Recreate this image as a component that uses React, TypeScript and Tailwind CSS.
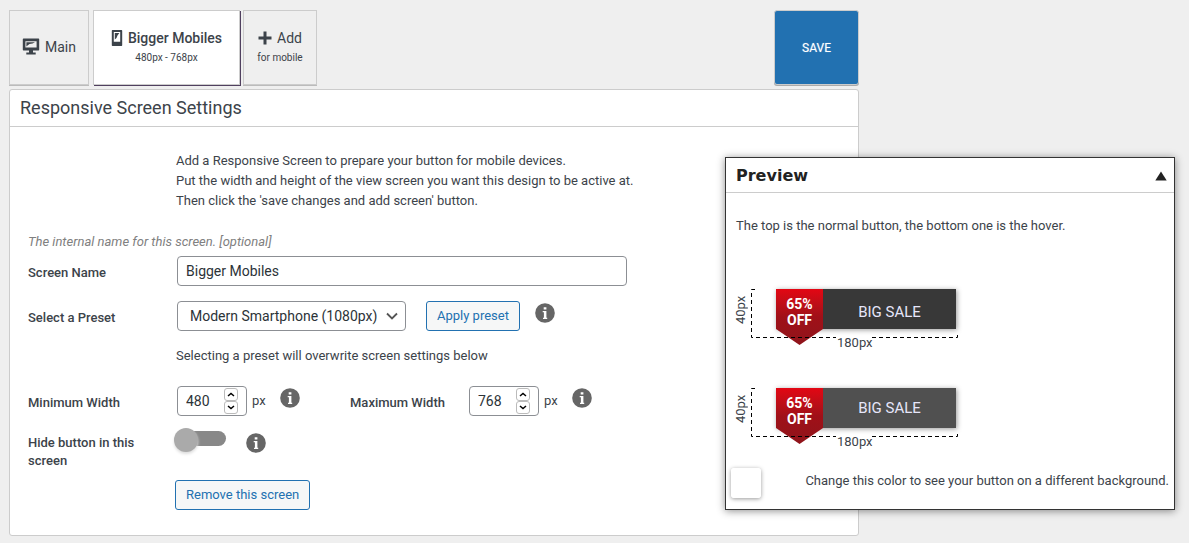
import { useState, type ReactNode } from "react";

function Info({ about, className = "" }: { about: string; className?: string }) {
  return (
    <button type="button" aria-label={about} className={`text-[#666] ${className}`}>
      <svg className="block" width="20" height="20" viewBox="0 0 20 20" aria-hidden="true">
        <circle cx="10" cy="10" r="9.800" fill="currentColor" />
        <path fill="#fff" d="M8.700 4.200h2.700v2.400H8.700zM7.700 8h3.700v6.800h0.800v1.200H8v-1.200h0.900V9.200H7.700z" />
      </svg>
    </button>
  );
}

function DesktopIcon() {
  return (
    <svg width="18" height="17" viewBox="0 0 18 17" aria-hidden="true">
      <path fill="currentColor" fillRule="evenodd" d="M1.500 0.500h15q0.700 0 0.700 0.700v10.600q0 0.700-0.700 0.700H11V14.500h2.700V16.500H4.300V14.500H7V12.500H1.500q-0.700 0-0.700-0.700V1.200q0-0.700 0.700-0.700zM3.400 3.200v6.400h11.200V3.200z" />
      <path fill="currentColor" d="M4.400 4.200h8.600L10.500 5.400 7.500 6 5.500 7.500 4.400 8.500z" />
    </svg>
  );
}

function PhoneIcon() {
  return (
    <svg width="12" height="18" viewBox="0 0 12 18" aria-hidden="true">
      <path fill="currentColor" fillRule="evenodd" d="M1.500 1h9q0.700 0 0.700 0.700v14.600q0 0.700-0.700 0.700h-9q-0.700 0-0.700-0.700V1.700q0-0.700 0.700-0.700zM2.800 3v9.800h6.400V3z" />
      <path fill="currentColor" d="M3.800 4h4.600L6.500 6.500 5.500 9 3.800 10.500z" />
    </svg>
  );
}

function PlusIcon() {
  return (
    <svg width="14" height="14" viewBox="0 0 14 14" aria-hidden="true">
      <path fill="currentColor" d="M5.500 0.500h3v5h5v3h-5v5h-3v-5h-5v-3h5z" />
    </svg>
  );
}

function Tab({ icon, title, note, active = false, className }: {
  icon: ReactNode; title: string; note?: string; active?: boolean; className: string;
}) {
  return (
    <button
      type="button"
      className={`flex h-[75px] flex-col items-center justify-center border border-[#ccc] ${
        active ? "bg-white font-medium shadow-[1px_1px_0_#50405f]" : "bg-[#efefef] shadow-[0_1px_0_#bbb]"
      } ${note ? "pb-1" : "pb-[2px]"} ${className}`}
    >
      <span className="flex items-center gap-[5px] leading-6">
        {icon}
        <span className="text-[14px]">{title}</span>
      </span>
      {note && <span className="text-[10px] font-normal leading-4">{note}</span>}
    </button>
  );
}

function NumberField({ id, initial }: { id: string; initial: number }) {
  const [value, setValue] = useState(initial);
  const step = "flex h-[13px] w-[14px] items-center justify-center rounded-[3px] border border-[#bbb] bg-white text-black";
  return (
    <span className="flex h-[30px] w-[70px] items-center rounded border border-[#8c8f94] pl-2">
      <input
        id={id}
        type="text"
        inputMode="numeric"
        value={value}
        onChange={(e) => setValue(Number(e.target.value) || 0)}
        className="w-[38px] min-w-0 bg-transparent text-[14px] text-[#2c3338] outline-none"
      />
      <span className="flex flex-col">
        <button type="button" aria-label="Increase" onClick={() => setValue(value + 1)} className={step}>
          <svg width="8" height="5" viewBox="0 0 8 5"><path d="M1 4l3-2.500L7 4" fill="none" stroke="currentColor" strokeWidth="1.500" /></svg>
        </button>
        <button type="button" aria-label="Decrease" onClick={() => setValue(value - 1)} className={step}>
          <svg width="8" height="5" viewBox="0 0 8 5"><path d="M1 1l3 2.500L7 1" fill="none" stroke="currentColor" strokeWidth="1.500" /></svg>
        </button>
      </span>
    </span>
  );
}

function SaleButton({ hover = false }: { hover?: boolean }) {
  return (
    <div className="flex h-[60px] items-start">
      <span className="h-[42px] w-[14px] rotate-180 text-center text-[13px] leading-[14px] [writing-mode:vertical-rl]">40px</span>
      <div className="relative ml-7 w-[180px]">
        <a
          href="#sale"
          className={`flex h-10 items-center pl-[47px] text-[15px] text-[#e6e6fa] shadow-[1px_1px_5px_#999] ${
            hover ? "bg-[#505050]" : "bg-[#383838] pt-1.5"
          }`}
        >
          <span className="flex-1 text-center">BIG SALE</span>
        </a>
        <span className="absolute left-0 top-0 h-14 w-[47px] bg-linear-to-b from-[#e30613] via-[#a01018] via-50% to-[#8f141b] pt-[7px] text-center text-[14px] font-bold leading-4 text-white [clip-path:polygon(0_0,100%_0,100%_40px,50%_100%,0_40px)]">
          65%<br />OFF
        </span>
        <svg className="absolute -left-[25px] top-0" width="208" height="50" viewBox="0 0 208 50" aria-hidden="true">
          <path d="M4 0.500H0.500V48.500H85M121 48.500H206.500V45" fill="none" stroke="#000" strokeDasharray="4 3" />
        </svg>
        <span className="absolute left-[61px] top-[46px] text-[13px] leading-4">180px</span>
      </div>
    </div>
  );
}

const label = "w-[148px] shrink-0 pt-1 text-[13px] font-medium";
const outline = "h-[30px] rounded-[3px] border border-[#2271b1] bg-[#f6f7f7] px-[10px] text-[13px] text-[#2271b1]";

export default function App() {
  const [hidden, setHidden] = useState(false);
  const [open, setOpen] = useState(true);
  return (
    <div className="relative min-h-screen bg-[#efefef] px-[9px] pt-[10px] pb-[7px] font-[Roboto,sans-serif] text-[13px] text-[#3c434a]">
      <main className="w-full max-w-[850px]">
        <nav className="mb-1 flex">
          <Tab className="mr-1 w-20" icon={<DesktopIcon />} title="Main" />
          <Tab className="mr-[3px] w-[147px]" icon={<PhoneIcon />} title="Bigger Mobiles" note="480px - 768px" active />
          <Tab className="w-[74px]" icon={<PlusIcon />} title="Add" note="for mobile" />
          <button type="button" className="ml-auto h-[75px] w-[85px] rounded-[3px] border border-[#ccc] bg-[#2271b1] text-[12px] text-white shadow-[0_1px_0_#aaa] [text-shadow:0_0_1px_rgba(255,255,255,0.5)]">
            SAVE
          </button>
        </nav>

        <form className="rounded-[3px] border border-[#ccc] bg-white" onSubmit={(e) => e.preventDefault()}>
          <h1 className="border-b border-[#ccc] px-[10px] pt-1 pb-1 text-[18px] leading-7">Responsive Screen Settings</h1>
          <div className="px-[18px] pt-[24px] pb-[25px]">
            <p className="pl-[148px] leading-5">
              Add a Responsive Screen to prepare your button for mobile devices.<br />
              Put the width and height of the view screen you want this design to be active at.<br />
              Then click the 'save changes and add screen' button.
            </p>
            <p className="mt-[21px] leading-5 italic text-[#808080]">The internal name for this screen. [optional]</p>

            <div className="mt-1 flex items-center">
              <label htmlFor="name" className={label}>Screen Name</label>
              <input id="name" defaultValue="Bigger Mobiles" className="ml-px h-[30px] w-[450px] rounded border border-[#8c8f94] px-2 text-[14px] text-[#2c3338]" />
            </div>

            <div className="mt-[15px] flex items-center">
              <label htmlFor="preset" className={label}>Select a Preset</label>
              <span className="relative ml-px flex w-[229px] items-center">
                <select id="preset" className="h-[30px] w-full appearance-none rounded border border-[#8c8f94] bg-white pl-3 pr-6 text-[14px] text-[#2c3338]">
                  <option>Modern Smartphone (1080px)</option>
                </select>
                <svg className="pointer-events-none absolute right-2" width="12" height="8" viewBox="0 0 12 8" aria-hidden="true">
                  <path d="M1 1.500l5 5 5-5" fill="none" stroke="#555" strokeWidth="1.800" />
                </svg>
              </span>
              <button type="button" className={`ml-5 ${outline}`}>Apply preset</button>
              <Info about="About presets" className="mb-1.5 ml-[15px]" />
            </div>

            <p className="mt-[15px] pl-[148px] leading-5">Selecting a preset will overwrite screen settings below</p>

            <div className="mt-5 flex items-center">
              <label htmlFor="min" className={label}>Minimum Width</label>
              <span className="ml-px flex w-[173px] items-center">
                <NumberField id="min" initial={480} />
                <span className="ml-[5px]">px</span>
                <Info about="About minimum width" className="mb-1.5 ml-[14px]" />
              </span>
              <label htmlFor="max" className="w-[119px] pt-1 text-[13px] font-medium">Maximum Width</label>
              <NumberField id="max" initial={768} />
              <span className="ml-[5px]">px</span>
              <Info about="About maximum width" className="mb-1.5 ml-[14px]" />
            </div>

            <div className="mt-3 flex items-start">
              <label htmlFor="hide" className="w-[148px] shrink-0 pt-[6px] pr-6 text-[13px] leading-[18px] font-medium">Hide button in this screen</label>
              <span className="relative mt-[3px] ml-1 flex h-[15px] w-[46px] rounded-full bg-[#888]">
                <input
                  id="hide"
                  type="checkbox"
                  checked={hidden}
                  onChange={() => setHidden(!hidden)}
                  className="absolute -top-[3px] -left-[6px] size-6 appearance-none rounded-full bg-[#aaa] shadow-[0_2px_3px_#ddd] checked:left-7 checked:bg-[#2271b1]"
                />
              </span>
              <Info about="About hiding the button" className="mt-[5px] ml-5" />
            </div>

            <button type="button" className={`mt-[10px] ml-[147px] ${outline}`}>Remove this screen</button>
          </div>
        </form>
      </main>

      <section className="absolute top-[157px] right-[14px] w-[450px] border border-[#333] bg-white shadow-[0_1px_8px_rgba(0,0,0,0.45)]">
        <header className="flex h-[35px] items-center justify-between border-b border-[#ccc] pt-[2px] pr-[7px] pl-[10px] text-[#222]">
          <h2 className="font-['DejaVu_Sans',sans-serif] text-[16px] font-bold">Preview</h2>
          <button type="button" aria-label="Toggle preview" onClick={() => setOpen(!open)}>
            <svg width="12" height="10" viewBox="0 0 12 10" aria-hidden="true"><path d="M6 0.500L11.700 9.500H0.300z" fill="currentColor" /></svg>
          </button>
        </header>
        {open && (
          <div className="pt-[23px] pb-[11px]">
            <p className="pl-[10px] leading-5">The top is the normal button, the bottom one is the hover.</p>
            <div className="mt-[53px] flex flex-col gap-[39px] pl-2">
              <SaleButton />
              <SaleButton hover />
            </div>
            <div className="mt-5 flex items-center pr-[5px] pl-[5px]">
              <input id="backdrop" type="color" defaultValue="#ffffff" className="size-[30px] appearance-none rounded-[3px] bg-white shadow-[0_1px_4px_rgba(0,0,0,0.4)] [&::-webkit-color-swatch-wrapper]:p-0 [&::-webkit-color-swatch]:rounded-[3px] [&::-webkit-color-swatch]:border-0" />
              <label htmlFor="backdrop" className="ml-auto pb-1 whitespace-nowrap">Change this color to see your button on a different background.</label>
            </div>
          </div>
        )}
      </section>
    </div>
  );
}
